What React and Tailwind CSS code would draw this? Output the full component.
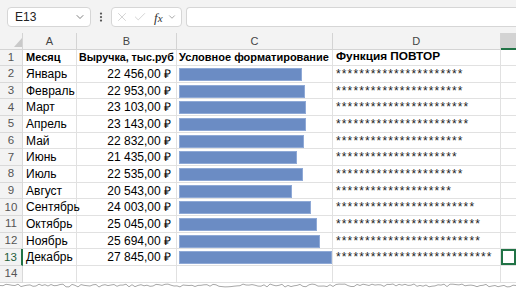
import React from 'react';
import { ChevronDown, X, Check, EllipsisVertical } from 'lucide-react';

const months = [
  ['Январь', 22456],
  ['Февраль', 22953],
  ['Март', 23103],
  ['Апрель', 23143],
  ['Май', 22832],
  ['Июнь', 21435],
  ['Июль', 22535],
  ['Август', 20543],
  ['Сентябрь', 24003],
  ['Октябрь', 25045],
  ['Ноябрь', 25694],
  ['Декабрь', 27845],
];

const maxValue = 27845;

const money = (v) => `${Math.floor(v / 1000)}\u00a0${String(v % 1000).padStart(3, '0')},00\u00a0₽`;

// jagged "torn paper" edge along the bottom
const tornPoints = () => {
  const pts = [];
  let seed = 7;
  for (let x = 0; x <= 520; x += 3) {
    seed = (seed * 9301 + 49297) % 233280;
    const y = 2 + (seed / 233280) * 3;
    pts.push(`${x},${y.toFixed(1)}`);
  }
  return pts;
};

const rowH = 'h-[16.67px]';

const App = () => {
  const pts = tornPoints();

  return (
    <div className="relative w-[516px] h-[290px] overflow-hidden bg-white font-['Liberation_Sans',sans-serif] text-[12px] text-black">
      {/* Formula bar */}
      <div className="flex items-start h-[33px] pt-[7px] bg-[#f3f3f3] pl-[7px]">
        <div className="flex items-center justify-between w-[84px] h-[20px] bg-white border border-[#d6d6d6] rounded-[4px] pl-[7px] pr-[4px]">
          <span className="text-[12px] text-[#222]">E13</span>
          <ChevronDown size={12} strokeWidth={1.5} className="text-[#555]" />
        </div>
        <div className="flex items-center justify-center w-[20px] h-[20px]">
          <EllipsisVertical size={12} strokeWidth={2.5} className="text-[#555]" />
        </div>
        <div className="flex items-center w-[71px] h-[20px] bg-white border border-[#d6d6d6] rounded-[4px] pl-[3px] gap-[4px]">
          <X size={14} strokeWidth={1} className="text-[#b5b5b5]" />
          <Check size={14} strokeWidth={1} className="text-[#b5b5b5]" />
          <span className="ml-[3px] font-['Liberation_Serif',serif] italic text-[13px] text-[#333] leading-none">
            f<span className="text-[11px]">x</span>
          </span>
          <ChevronDown size={10} strokeWidth={1.5} className="text-[#777]" />
        </div>
        <div className="ml-[4px] flex-1 h-[20px] bg-white border border-[#d6d6d6] rounded-l-[4px] border-r-0" />
      </div>

      {/* Sheet grid */}
      <div className="grid grid-cols-[23px_54px_100px_156px_167.5px_1fr]">
        {/* column headers */}
        <div className="relative h-[16.5px] bg-[#f3f3f3] border-r border-b border-[#d4d4d4]">
          <svg className="absolute left-[14px] top-[5px]" width="8" height="9" viewBox="0 0 8 9">
            <polygon points="8,0 8,9 0,9" fill="#c9c9c9" />
          </svg>
        </div>
        {['A', 'B', 'C', 'D'].map((c) => (
          <div
            key={c}
            className="h-[16.5px] flex items-center justify-center bg-[#f3f3f3] border-r border-b border-[#d4d4d4] text-[11px] text-[#444]"
          >
            {c}
          </div>
        ))}
        <div className="h-[16.5px] bg-[#d3d3d3] border-b-2 border-[#217346]" />

        {/* row 1: titles */}
        <div className={`${rowH} flex items-center justify-center bg-[#f3f3f3] border-r border-b border-[#d9d9d9] text-[11.5px] text-[#555]`}>1</div>
        <div className={`${rowH} flex items-center pl-[3px] border-r border-b border-[#e1e1e1] font-bold text-[11px]`}>Месяц</div>
        <div className={`${rowH} flex items-center pl-[2px] border-r border-b border-[#e1e1e1] font-bold text-[10.7px] whitespace-nowrap`}>Выручка, тыс.руб</div>
        <div className={`${rowH} flex items-center pl-[2px] border-r border-b border-[#e1e1e1] font-bold text-[11px] whitespace-nowrap`}>Условное форматирование</div>
        <div className={`${rowH} flex items-center pl-[3px] border-r border-b border-[#e1e1e1] font-bold text-[11.8px]`}>Функция ПОВТОР</div>
        <div className={`${rowH} border-b border-[#e1e1e1]`} />

        {months.map(([name, v], i) => {
          const last = i === months.length - 1;
          return (
            <React.Fragment key={name}>
              <div
                className={`${rowH} flex items-center justify-center bg-[#f3f3f3] border-b border-[#d9d9d9] text-[11.5px] ${
                  last ? 'border-r-2 border-r-[#217346] bg-[#e6e6e6] text-[#1e5e3a]' : 'border-r text-[#555]'
                }`}
              >
                {i + 2}
              </div>
              <div className={`${rowH} flex items-center pl-[3px] border-r border-b border-[#e1e1e1]`}>{name}</div>
              <div className={`${rowH} flex items-center justify-end pr-[5px] border-r border-b border-[#e1e1e1] whitespace-nowrap`}>
                {money(v)}
              </div>
              <div className={`${rowH} pt-[2px] pl-[2px] border-r border-b border-[#e1e1e1]`}>
                <div
                  className="h-[13px] bg-[#6b8cc4] border border-[#8fa9d6]"
                  style={{ width: `${(v * 153) / maxValue}px` }}
                />
              </div>
              <div className={`${rowH} flex items-center pl-[3px] border-r border-b border-[#e1e1e1] overflow-hidden`}>
                <span className="tracking-[1.13px] text-[12px] text-[#222] whitespace-nowrap">
                  {'*'.repeat(Math.floor(v / 1000))}
                </span>
              </div>
              <div
                className={`${rowH} border-b border-[#e1e1e1] ${last ? 'shadow-[inset_0_0_0_2px_#217346]' : ''}`}
              />
            </React.Fragment>
          );
        })}

        {/* row 14 */}
        <div className={`${rowH} flex items-center justify-center bg-[#f3f3f3] border-r border-b border-[#d9d9d9] text-[11.5px] text-[#555]`}>14</div>
        <div className={`${rowH} border-r border-b border-[#e1e1e1]`} />
        <div className={`${rowH} border-r border-b border-[#e1e1e1]`} />
        <div className={`${rowH} border-r border-b border-[#e1e1e1]`} />
        <div className={`${rowH} border-r border-b border-[#e1e1e1]`} />
        <div className={`${rowH} border-b border-[#e1e1e1]`} />
      </div>

      {/* torn bottom edge */}
      <svg className="absolute left-0 bottom-0" width="516" height="8" viewBox="0 0 516 8">
        <polygon points={`0,8 ${pts.join(' ')} 520,8`} fill="#ffffff" />
        <polyline points={pts.join(' ')} fill="none" stroke="#a8a8a8" strokeWidth="1" />
      </svg>
    </div>
  );
};

export default App;
